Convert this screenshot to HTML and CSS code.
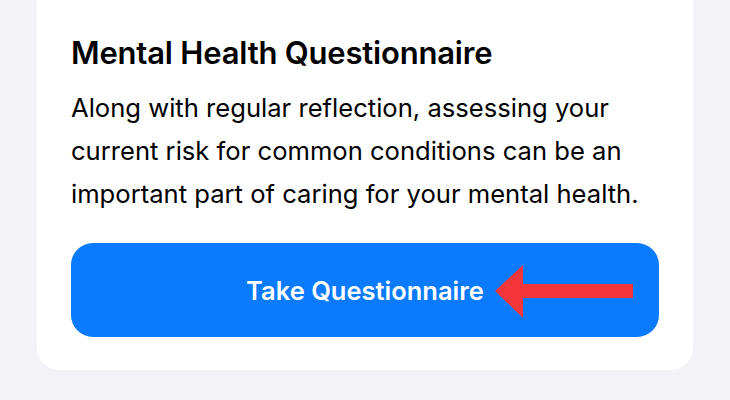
FILE: index.html
```html
<!DOCTYPE html>
<html>
<head>
<meta charset="utf-8">
<link rel="stylesheet" href="styles.css">
</head>
<body>
<div class="card">
  <h1 class="title">Mental Health Questionnaire</h1>
  <p class="desc">Along with regular reflection, assessing your current risk for common conditions can be an important part of caring for your mental health.</p>
  <div class="btn-wrap">
    <button class="btn">Take Questionnaire</button>
    <svg class="arrow" width="150" height="60" viewBox="0 0 150 60">
      <polygon points="0,27 28,1 28,20 138,20 138,34 28,34 28,54" fill="#f3363a"/>
    </svg>
  </div>
</div>
</body>
</html>
```
FILE: styles.css
```css
html, body {
  margin: 0;
  padding: 0;
  background: #f2f2f7;
  width: 730px;
  height: 400px;
  overflow: hidden;
}
.card {
  margin: 0 37px;
  background: #ffffff;
  border-radius: 0 0 22px 22px;
  padding: 34px 34px 33px;
  font-family: Inter, "Noto Sans", sans-serif;
  color: #000;
}
.title {
  margin: 0;
  font-size: 31px;
  line-height: 38px;
  font-weight: 600;
  letter-spacing: -0.2px;
}
.desc {
  margin: 14px 0 0;
  font-size: 25.6px;
  line-height: 43px;
  font-weight: 400;
}
.btn-wrap {
  position: relative;
  margin-top: 28px;
}
.btn {
  display: flex;
  align-items: center;
  justify-content: center;
  width: 100%;
  height: 94px;
  border: none;
  border-radius: 22px;
  background: #0a7aff;
  color: #fff;
  font-family: Inter, "Noto Sans", sans-serif;
  font-size: 25.5px;
  font-weight: 600;
  padding: 0;
}
.arrow {
  position: absolute;
  left: 424px;
  top: 21px;
}
```
